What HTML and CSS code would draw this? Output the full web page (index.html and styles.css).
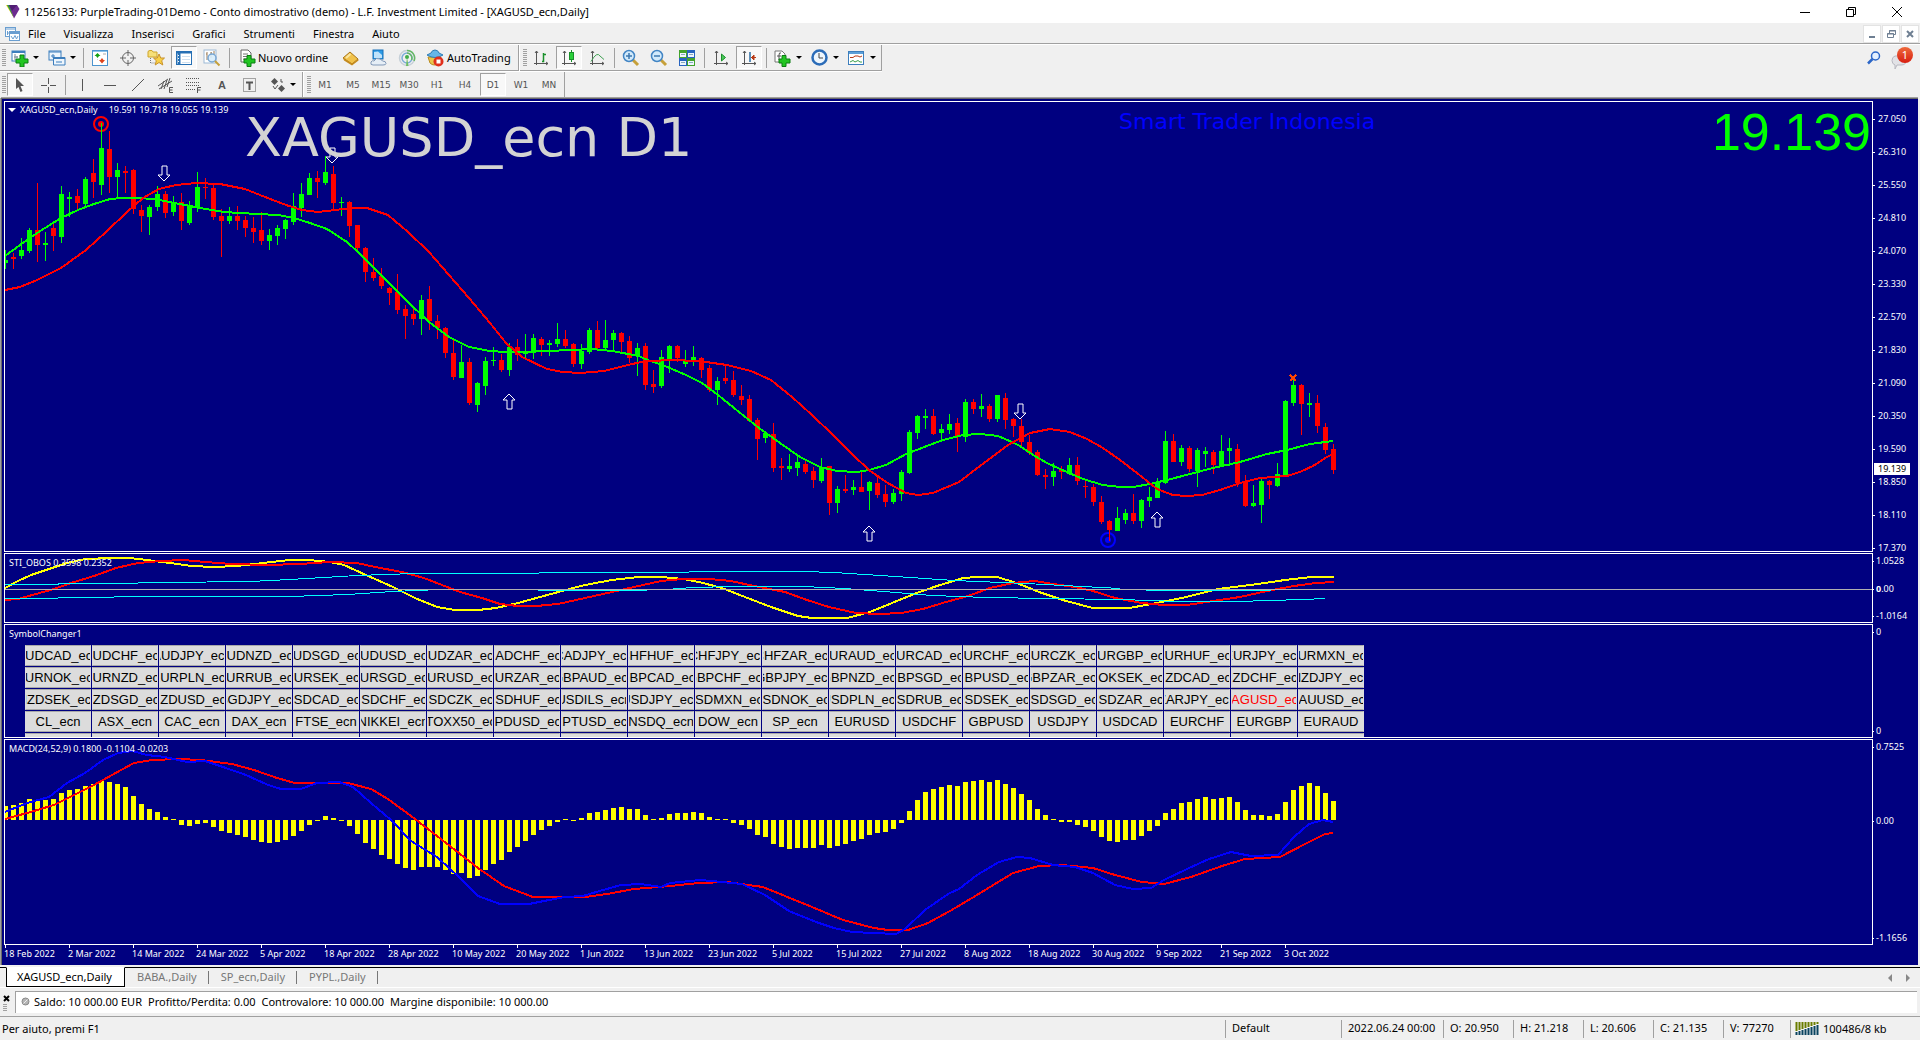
FILE: index.html
```html
<!DOCTYPE html>
<html lang="it">
<head>
<meta charset="utf-8">
<title>11256133: PurpleTrading-01Demo - [XAGUSD_ecn,Daily]</title>
<link rel="stylesheet" href="styles.css">
</head>
<body>
<header class="titlebar">
  <svg class="app-logo" width="14" height="14" viewBox="0 0 14 14"><path d="M0 0H4L8 13Z" fill="#f2d21b"/><path d="M1 0H4L7.500 12.500Z" fill="#2d9a4b"/><path d="M3 0H11L13.500 4L8 13.500Z" fill="#6c2c8f"/><path d="M3 0H11L6 6Z" fill="#4f1e72"/></svg>
  <h1 class="window-title">11256133: PurpleTrading-01Demo - Conto dimostrativo (demo) - L.F. Investment Limited - [XAGUSD_ecn,Daily]</h1>
  <div class="window-controls">
    <button aria-label="Riduci a icona"><svg width="12" height="12"><path d="M1 6.500H11" stroke="#000"/></svg></button>
    <button aria-label="Ripristina"><svg width="12" height="12" fill="none" stroke="#000"><path d="M1.500 3.500H8.500V10.500H1.500ZM3.500 3.500V1.500H10.500V8.500H8.500"/></svg></button>
    <button aria-label="Chiudi"><svg width="12" height="12" stroke="#000"><path d="M1 1L11 11M11 1L1 11"/></svg></button>
  </div>
</header>
<nav class="menubar">
  <svg class="menu-icon" width="15" height="14" fill="#fff" stroke="#6a9ed0"><rect x="0.500" y="0.500" width="10" height="9"/><path d="M1 2H10M2.500 4V8M2 6H5" /><rect x="4.500" y="4.500" width="10" height="9"/><path d="M5 6H14" stroke-width="2"/><path d="M6 9L8 12L10 8.500L11.500 12L13 9" fill="none"/></svg>
  <button>File</button><button>Visualizza</button><button>Inserisci</button><button>Grafici</button><button>Strumenti</button><button>Finestra</button><button>Aiuto</button>
  <div class="mdi-controls">
    <button aria-label="Riduci grafico"><svg width="10" height="10"><path d="M2 8H8" stroke="#6e7f92" stroke-width="2"/></svg></button>
    <button aria-label="Ripristina grafico"><svg width="10" height="10" fill="none" stroke="#6e7f92"><path d="M1.500 4.500H7.500V8.500H1.500ZM1 5H8M3.500 4V1.500H9.500V5.500H8M3 2H10"/></svg></button>
    <button aria-label="Chiudi grafico"><svg width="10" height="10" stroke="#6e7f92" stroke-width="2"><path d="M2 2L8 8M8 2L2 8"/></svg></button>
  </div>
</nav>

<div class="toolbars">
  <div class="toolbar-rows">
  <div class="toolbar-row">
    <div class="toolbar">
      <i class="grip"></i>
      <button class="tool drop" aria-label="Nuovo grafico"><svg width="18" height="18"><rect x="1" y="2" width="13" height="10" fill="#fff" stroke="#3c7ebd"/><path d="M1 3H14" stroke="#3c7ebd" stroke-width="2"/><path d="M4 5V11M3 8H7M6 7V9" stroke="#7a8a98" fill="none"/><path d="M9 6H13V10H17V14H13V18H9V14H5V10H9Z" fill="#22c522" stroke="#0b7d12"/></svg></button>
      <button class="tool drop" aria-label="Profili"><svg width="18" height="18" fill="#eef6fd" stroke="#3c7ebd"><rect x="1" y="2" width="12" height="9"/><path d="M1 3H13M3 7H7M5 5V9"/><path d="M5.500 8.500H17V16H5.500Z"/><path d="M5 9H17" stroke-width="2"/><path d="M8 13H14"/></svg></button>
      <i class="sep"></i>
      <button class="tool" aria-label="Market Watch"><svg width="16" height="16"><rect x="0.500" y="0.500" width="15" height="15" fill="#fff" stroke="#4b94cf"/><path d="M1 1.500H15" stroke="#8cc3ea"/><path d="M2.500 6L5.500 3L8.500 6H7L5.500 8L4 6Z" fill="#12a012"/><path d="M7 10H8.500L10 8L11.500 10H13L10 13.500Z" fill="#e0441c"/><path d="M5.500 9V9.500M11 4H14" stroke="#aaa"/></svg></button>
      <button class="tool" aria-label="Finestra dati"><svg width="16" height="16" fill="none" stroke="#666"><circle cx="8" cy="8" r="5.500"/><path d="M8 0V6M8 10V16M0 8H6M10 8H16"/></svg></button>
      <button class="tool" aria-label="Navigatore"><svg width="18" height="17"><path d="M1 3Q1 1.500 3 1.500H5L6 3H10V8H1Z" fill="#f6df78" stroke="#cfa52a"/><path d="M3.500 9V14H8" fill="none" stroke="#777" stroke-dasharray="1 1"/><path d="M12 5L13.700 9H17.500L14.700 11.700L15.800 16L12 13.500L8.200 16L9.300 11.700L6.500 9H10.300Z" fill="#f8cf45" stroke="#c8922a"/></svg></button>
      <button class="tool pressed" aria-label="Terminale"><svg width="16" height="14"><rect x="0.500" y="0.500" width="15" height="13" fill="#fff" stroke="#256fb4"/><path d="M1 1.500H15" stroke="#256fb4" stroke-width="2"/><path d="M3 2V13" stroke="#256fb4" stroke-width="3"/><path d="M2 4.500H3M2 7.500H3M2 10.500H3" stroke="#fff"/><path d="M6 5.500H14M6 8.500H14M6 11.500H14" stroke="#cfe0f0"/></svg></button>
      <button class="tool" aria-label="Tester strategia"><svg width="18" height="18"><rect x="1" y="1" width="12" height="13" fill="#fff" stroke="#9dbad6"/><path d="M4 3V11M8 3V9M11 2V6M3 5H4M8 4H9" stroke="#9b7d58"/><circle cx="9" cy="9" r="4" fill="#d7ecfb" fill-opacity=".9" stroke="#78a7d4" stroke-width="1.500"/><path d="M12 12L16.500 16.500" stroke="#c6a03a" stroke-width="2"/></svg></button>
      <i class="sep"></i>
      <button class="tool order"><svg width="16" height="18"><path d="M1 1H8L11 4V13H1Z" fill="#fff" stroke="#666"/><path d="M3 5H8M3 7.500H8M3 10H7" stroke="#777"/><path d="M7 6.500H11V10H15V14H11V17.500H7V14H4V10H7Z" fill="#22c522" stroke="#0b7d12"/></svg>Nuovo ordine</button>
      <button class="tool" aria-label="MetaEditor"><svg width="18" height="16"><path d="M1 8L8 2L16 9L10 14Z" fill="#f1c24a" stroke="#a87518"/><path d="M1 8L2 10.500L10 15.500L16.500 10.500V9L10 13.500Z" fill="#c58b1e"/><path d="M4 8L8.500 4" stroke="#fbe6a0" stroke-width="2"/></svg></button>
      <button class="tool" aria-label="VPS"><svg width="18" height="18"><rect x="3" y="1" width="10" height="9" fill="#2d9be6" stroke="#1871b8"/><path d="M4 3L8 2.500L12 6V9H4Z" fill="#bfe3fb"/><path d="M3 16Q0 16 1 13Q2 11 4 12Q6 8 10 10Q12 11 12.500 12Q16 12 16 14.500Q16 16 13 16Z" fill="#e6eef6" stroke="#8299b8"/></svg></button>
      <button class="tool" aria-label="Segnali"><svg width="18" height="18" fill="none"><circle cx="9" cy="9" r="7.500" stroke="#c6d0d8" stroke-width="1.500"/><circle cx="9" cy="9" r="5" stroke="#7bacd8" stroke-width="1.500"/><path d="M9 1.500A7.500 7.500 0 0 1 16 12M9 4A5 5 0 0 1 13.500 11" stroke="#65b865" stroke-width="1.500"/><circle cx="9" cy="8" r="2" fill="#3fae48"/><path d="M9 8L10.500 17H8Z" fill="#6ebd63"/></svg></button>
      <button class="tool auto"><svg width="18" height="18"><path d="M2 8L15 8L13 14Q8 18 4 14Z" fill="#e9c54c" stroke="#b98b22"/><path d="M1 6Q9 11 17 6L13 4Q12 1 9 1Q6 1 5 4Z" fill="#66b6e8" stroke="#2f7cb5"/><circle cx="12.500" cy="12.500" r="5" fill="#e02f1b"/><rect x="10.500" y="10.500" width="4" height="4" fill="#fff"/></svg>AutoTrading</button>
    </div>
    <div class="toolbar">
      <i class="grip"></i>
      <button class="tool" aria-label="Grafico a barre"><svg width="16" height="16" fill="none" stroke="#555"><path d="M3.500 1V15M1 13.500H15M2 3L3.500 1L5 3M13 12L15 13.500L13 15"/><path d="M9 11.500H10.500V3M10.500 4.500H13" stroke="#19902a" stroke-width="1.500"/></svg></button>
      <button class="tool pressed" aria-label="Candele"><svg width="16" height="16" fill="none" stroke="#555"><path d="M3.500 1V15M1 13.500H15M2 3L3.500 1L5 3M13 12L15 13.500L13 15"/><path d="M10.500 0V12" stroke="#19902a"/><rect x="8.500" y="2.500" width="4" height="7" fill="#2bd03a" stroke="#19902a"/></svg></button>
      <button class="tool" aria-label="Grafico lineare"><svg width="16" height="16" fill="none" stroke="#555"><path d="M3.500 1V15M1 13.500H15M2 3L3.500 1L5 3M13 12L15 13.500L13 15"/><path d="M2 11.500Q8 1 11 6L15 9.500" stroke="#3fa052"/></svg></button>
      <i class="sep"></i>
      <button class="tool" aria-label="Ingrandisci"><svg width="18" height="18"><path d="M10 10L16 16" stroke="#c6a03a" stroke-width="3"/><circle cx="7" cy="7" r="5.500" fill="#d2eafb" stroke="#4285c4" stroke-width="1.500"/><path d="M4 7H10M7 4V10" stroke="#3c78b0" stroke-width="1.500"/></svg></button>
      <button class="tool" aria-label="Riduci"><svg width="18" height="18"><path d="M10 10L16 16" stroke="#c6a03a" stroke-width="3"/><circle cx="7" cy="7" r="5.500" fill="#d2eafb" stroke="#4285c4" stroke-width="1.500"/><path d="M4 7H10" stroke="#3c78b0" stroke-width="1.500"/></svg></button>
      <button class="tool" aria-label="Affianca"><svg width="16" height="16"><path d="M0 0H8V8H0ZM8 8H16V16H8Z" fill="#43a32c"/><path d="M8 0H16V8H8ZM0 8H8V16H0Z" fill="#2864c0"/><path d="M1 3H7V7H1ZM9 3H15V7H9ZM1 11H7V15H1ZM9 11H15V15H9Z" fill="#eef5ff"/><path d="M2 4.500H6M10 4.500H14M2 12.500H6M10 12.500H14" stroke="#8ab"/></svg></button>
      <i class="sep"></i>
      <button class="tool" aria-label="Scorrimento automatico"><svg width="16" height="16" fill="none" stroke="#555"><path d="M3.500 1V15M1 13.500H15M2 3L3.500 1L5 3M13 12L15 13.500L13 15"/><path d="M8.500 4L12.500 7.500L8.500 11Z" fill="#4bc85a" stroke="#19902a"/></svg></button>
      <button class="tool pressed" aria-label="Spostamento grafico"><svg width="16" height="16" fill="none" stroke="#555"><path d="M3.500 1V15M1 13.500H15M2 3L3.500 1L5 3M13 12L15 13.500L13 15"/><path d="M9 2V12" stroke="#2b6ca3" stroke-width="1.500"/><path d="M10 7.500H15M13 5L10.500 7.500L13 10Z" stroke="#b83a16" fill="#b83a16"/></svg></button>
      <i class="sep"></i>
      <button class="tool drop" aria-label="Indicatori"><svg width="18" height="18"><path d="M1 2H8L11 5V13H1Z" fill="#fff" stroke="#777"/><path d="M7 4Q5 3 5 6V11M3 7H7" fill="none" stroke="#555"/><path d="M8 6.500H12V10H16V14H12V17.500H8V14H5V10H8Z" fill="#22c522" stroke="#0b7d12"/></svg></button>
      <button class="tool drop" aria-label="Periodicità"><svg width="18" height="18"><circle cx="8.500" cy="8.500" r="7" fill="#eef6fd" stroke="#2b6cb8" stroke-width="2.500"/><path d="M8 4V9H12" fill="none" stroke="#444"/></svg></button>
      <button class="tool drop" aria-label="Modelli"><svg width="18" height="16"><rect x="0.500" y="1.500" width="15" height="13" fill="#fff" stroke="#3c7ebd"/><path d="M1 3H15" stroke="#5c9fd8" stroke-width="2"/><path d="M2 7.500H5L7 6H10L12 7L14 6" fill="none" stroke="#b83a16"/><path d="M2 12L5 10.500L7 12L10 10.500L12 12H14" fill="none" stroke="#3aa04a"/></svg></button>
    </div>
  </div>
  <div class="toolbar-row second">
    <div class="toolbar">
      <i class="grip"></i>
      <button class="tool pressed" aria-label="Cursore"><svg width="12" height="16"><path d="M2 1L10 9H6.500L8.500 14L6.500 15L4.500 10L2 12Z" fill="#555"/></svg></button>
      <button class="tool" aria-label="Mirino"><svg width="16" height="16" stroke="#555"><path d="M8.500 1V7M8.500 10V16M1 8.500H7M10 8.500H16"/></svg></button>
      <i class="sep"></i>
      <button class="tool" aria-label="Linea verticale"><svg width="16" height="16" stroke="#555"><path d="M8.500 2V14"/></svg></button>
      <button class="tool" aria-label="Linea orizzontale"><svg width="16" height="16" stroke="#555"><path d="M2 8.500H14"/></svg></button>
      <button class="tool" aria-label="Linea di tendenza"><svg width="16" height="16" stroke="#555"><path d="M2 14L14 2"/></svg></button>
      <button class="tool" aria-label="Canale equidistante"><svg width="16" height="16" fill="none" stroke="#555"><path d="M0 9L10 2M1 12L14 4M3 12L6 4M6 12L9 3M9 10L12 1"/><path d="M15 10.500H11.500V15.500H15M12 13H14.500"/></svg></button>
      <button class="tool" aria-label="Fibonacci"><svg width="16" height="16" fill="none" stroke="#555"><path d="M0 1.500H14M0 5.500H14M0 8.500H14M0 12.500H9" stroke-dasharray="1 1"/><path d="M15 10.500H11.500V16M12 13H14.500"/></svg></button>
      <button class="tool letter" aria-label="Testo">A</button>
      <button class="tool" aria-label="Etichetta"><svg width="14" height="14" fill="none" stroke="#555"><rect x="0.500" y="0.500" width="12" height="13" stroke-dasharray="1 1"/><path d="M3 4.500H10M6.500 4V12" stroke-width="2"/></svg></button>
      <button class="tool drop shapes" aria-label="Frecce"><svg width="16" height="16" fill="#555"><path d="M4.500 1L8 4.500L4.500 8L1 4.500Z"/><path d="M11.500 8L15 11.500L11.500 15L8 11.500Z"/><path d="M3 9L5 12L8 8M11 2V5H13" fill="none" stroke="#555"/></svg></button>
    </div>
    <div class="toolbar frames">
      <i class="grip"></i>
      <button class="tool">M1</button><button class="tool">M5</button><button class="tool">M15</button><button class="tool">M30</button><button class="tool">H1</button><button class="tool">H4</button><button class="tool pressed">D1</button><button class="tool">W1</button><button class="tool">MN</button>
    </div>
  </div>
  </div>
  <div class="toolbar-right">
    <button aria-label="Cerca"><svg width="14" height="14" fill="none"><circle cx="8.500" cy="5" r="4" fill="#e4f0ff" stroke="#2b66c8" stroke-width="1.500"/><path d="M5.500 8L1 12.500" stroke="#2b66c8" stroke-width="2.500"/></svg></button>
    <button class="chat" aria-label="Notifiche"><svg width="16" height="15"><path d="M4 1H12Q15 2 15 6Q15 10 10 10H6L4 14V10Q1 9 1 5.500Q1 2 4 1Z" fill="#e2e2e6" stroke="#b8b8c0"/></svg><span class="badge">1</span></button>
  </div>
</div>

<main class="chart">
  <section class="plot">
    <svg id="price" viewBox="5 102 1867 449" preserveAspectRatio="xMinYMin meet" shape-rendering="crispEdges"></svg>
    <p class="caption main-caption"><i class="caret"></i><span>XAGUSD_ecn,Daily</span> 19.591 19.718 19.055 19.139</p>
    <p class="watermark">XAGUSD_ecn D1</p>
    <p class="author">Smart Trader Indonesia</p>
    <p class="quote">19.139</p>
  </section>
  <div class="scale price-scale">
    <span>27.050</span><span>26.310</span><span>25.550</span><span>24.810</span><span>24.070</span><span>23.330</span><span>22.570</span><span>21.830</span><span>21.090</span><span>20.350</span><span>19.590</span><span>18.850</span><span>18.110</span><span>17.370</span>
    <b class="last-price">19.139</b>
  </div>

  <section class="plot">
    <svg id="obos" viewBox="5 554 1867 68" preserveAspectRatio="xMinYMin meet" shape-rendering="crispEdges"></svg>
    <p class="caption">STI_OBOS 0.3598 0.2352</p>
  </section>
  <div class="scale"><span>1.0528</span><span><b class="zero">0</b>.00</span><span>-1.0164</span></div>

  <section class="plot">
    <p class="caption">SymbolChanger1</p>
    <div class="symbols" id="symbols"></div>
  </section>
  <div class="scale"><span>0</span><span>0</span></div>

  <section class="plot">
    <svg id="macd" viewBox="5 740 1867 204" preserveAspectRatio="xMinYMin meet" shape-rendering="crispEdges"></svg>
    <p class="caption">MACD(24,52,9) 0.1800 -0.1104 -0.0203</p>
  </section>
  <div class="scale macd-scale"><span>0.7525</span><span>0.00</span><span>-1.1656</span></div>

  <div class="dates">
    <span>18 Feb 2022</span><span>2 Mar 2022</span><span>14 Mar 2022</span><span>24 Mar 2022</span><span>5 Apr 2022</span><span>18 Apr 2022</span><span>28 Apr 2022</span><span>10 May 2022</span><span>20 May 2022</span><span>1 Jun 2022</span><span>13 Jun 2022</span><span>23 Jun 2022</span><span>5 Jul 2022</span><span>15 Jul 2022</span><span>27 Jul 2022</span><span>8 Aug 2022</span><span>18 Aug 2022</span><span>30 Aug 2022</span><span>9 Sep 2022</span><span>21 Sep 2022</span><span>3 Oct 2022</span>
  </div>
</main>

<nav class="tabs">
  <button class="active">XAGUSD_ecn,Daily</button><button>BABA.,Daily</button><button>SP_ecn,Daily</button><button>PYPL.,Daily</button>
  <div class="tab-scroll">
    <button aria-label="Indietro"><svg width="5" height="8"><path d="M5 0V8L1 4Z" fill="#888"/></svg></button>
    <button aria-label="Avanti"><svg width="5" height="8"><path d="M0 0V8L4 4Z" fill="#888"/></svg></button>
  </div>
</nav>

<section class="account">
  <div class="account-handle"><button aria-label="Chiudi terminale"><svg width="7" height="7" stroke="#000" stroke-width="2"><path d="M1 1L6 6M6 1L1 6"/></svg></button><i class="grip short"></i></div>
  <div class="account-line"><svg width="9" height="9"><circle cx="4.500" cy="4.500" r="3.500" fill="#b5b5b5" stroke="#888"/><path d="M2.500 6.500L6.500 2.500" stroke="#eee"/></svg><span>Saldo: 10 000.00 EUR</span><span>Profitto/Perdita: 0.00</span><span>Controvalore: 10 000.00</span><span>Margine disponibile: 10 000.00</span></div>
</section>

<footer class="status">
  <span class="hint">Per aiuto, premi F1</span>
  <span class="cell profile">Default</span>
  <span class="cell time">2022.06.24 00:00</span>
  <span class="cell">O: 20.950</span>
  <span class="cell">H: 21.218</span>
  <span class="cell">L: 20.606</span>
  <span class="cell">C: 21.135</span>
  <span class="cell volume">V: 77270</span>
  <span class="cell traffic"><svg width="24" height="13"><path d="M1.500 0V9M4.500 0V8M7.500 0V7M10.500 0V6M13.500 0V5M16.500 0V4M19.500 0V3M22.500 0V2" stroke="#6a7d00" stroke-width="2"/><path d="M1.500 10V13M4.500 9V13M7.500 8V13M10.500 7V13M13.500 6V13M16.500 5V13M19.500 4V13M22.500 3V13" stroke="#0b4460" stroke-width="2"/></svg>100486/8 kb</span>
</footer>
<script src="chart.js"></script>
</body>
</html>
```
FILE: styles.css
```css
* { box-sizing: border-box; }
body { margin: 0; height: 100vh; display: flex; flex-direction: column; background: #f0f0f0; color: #000; font: 11px/16px "Noto Sans", "Open Sans", sans-serif; }
button { font: inherit; color: inherit; background: none; border: 0; padding: 0; margin: 0; }
svg { display: block; flex: none; }
p, h1 { margin: 0; }

.titlebar { display: flex; align-items: center; height: 23px; background: #fff; }
.app-logo { margin-left: 6px; }
.window-title { flex: 1; margin-left: 4px; font-size: 11px; font-weight: 400; }
.window-controls { display: flex; }
.window-controls button { width: 46px; height: 20px; display: grid; place-items: center; }

.menubar { display: flex; align-items: center; height: 22px; padding-left: 5px; border-bottom: 1px solid #fff; box-shadow: inset 0 -1px #a0a0a0; }
.menubar > button { padding: 0 8px; margin-right: 2px; }
.mdi-controls { margin-left: auto; display: flex; gap: 1px; padding-right: 1px; }
.mdi-controls button { width: 18px; height: 18px; display: grid; place-items: center; background: #fff; border: 1px solid #e3e3e3; }

.toolbars { display: flex; justify-content: space-between; }
.toolbar-rows { display: flex; flex-direction: column; align-items: flex-start; }
.toolbar-row { display: flex; height: 27px; border-bottom: 1px solid #fff; box-shadow: inset 0 -1px #a0a0a0; }
.toolbar-row.second { height: 25px; border: 0; box-shadow: none; }
.toolbar { display: flex; align-items: center; padding: 0 1px 1px 2px; border-right: 1px solid #a0a0a0; }
.toolbar + .toolbar { padding-left: 3px; border-left: 1px solid #fff; }
.second .toolbar { padding-bottom: 0; }
.grip { width: 4px; height: 18px; background: repeating-linear-gradient(#a0a0a0 0 1px, #f0f0f0 1px 2px); }
.grip.short { height: 8px; }
.sep { width: 1px; height: 20px; margin: 0 2px 0 3px; background: #a0a0a0; }
.tool { display: flex; align-items: center; justify-content: center; width: 28px; height: 24px; }
.tool.pressed { width: 26px; height: 23px; margin: 0 1px; background: #f8f8f8; border: 1px solid; border-color: #a0a0a0 #fff #fff #a0a0a0; }
.tool.drop { width: 37px; justify-content: flex-start; padding-left: 5px; gap: 4px; }
.tool.drop::after { content: ""; border: 3px solid transparent; border-top-color: #000; border-bottom: 0; }
.tool.shapes { padding-left: 6px; }
.tool.order { width: 105px; justify-content: flex-start; padding-left: 8px; gap: 2px; }
.tool.auto { width: 96px; justify-content: flex-start; padding-left: 5px; gap: 3px; }
.tool.letter { color: #555; font: bold 11px "Liberation Sans", sans-serif; }
.frames { font: 9px "DejaVu Sans", sans-serif; color: #555; }
.toolbar-right { display: flex; align-items: flex-start; gap: 10px; padding: 4px 7px 0 0; }
.toolbar-right button { position: relative; padding-top: 2px; }
.chat { width: 22px; }
.toolbar-right .chat { padding-top: 6px; }
.badge { position: absolute; top: -2px; left: 6px; width: 16px; height: 16px; border-radius: 8px; background: linear-gradient(#ee6a3c, #d81e10); color: #fff; }

.chart { flex: 1; min-height: 0; display: grid; grid-template-columns: minmax(0, 1fr) 45px; grid-template-rows: minmax(0, 451fr) minmax(0, 70fr) minmax(0, 114fr) minmax(0, 206fr) 19px; row-gap: 1px; padding: 2px 0 0 2px; background: #000080; color: #fff; border: solid #696969; border-width: 1px 0 0 1px; box-shadow: 0 -1px #a0a0a0, -1px 0 #a0a0a0; margin: 1px 2px 0 1px; font-size: 9px; line-height: 12px; }
.plot { position: relative; border: 1px solid #fff; overflow: hidden; }
.plot > svg { position: absolute; inset: 0; width: 100%; height: 100%; }
.caption { position: absolute; left: 4px; top: 3px; white-space: nowrap; }
.main-caption { display: flex; align-items: center; gap: 4px; left: 3px; top: 2px; }
.main-caption span { margin-right: 7px; }
.caret { border: 4px solid transparent; border-top-color: #fff; border-bottom: 0; }
.watermark { position: absolute; left: 240px; top: 4px; font: 54px/64px "DejaVu Sans", sans-serif; color: #d3d3d3; }
.author { position: absolute; left: 1114px; top: 8px; font: 22px/24px "DejaVu Sans", sans-serif; color: #00f; }
.quote { position: absolute; right: 1px; top: 1px; font: 52px/58px "Liberation Sans", sans-serif; color: #0f0; }

.scale { position: relative; display: flex; flex-direction: column; justify-content: space-between; padding: 2px 0 1px 3px; }
.scale span { line-height: 12px; height: 12px; position: relative; }
.scale span::before { content: ""; position: absolute; left: -3px; top: 6px; width: 1px; height: 1px; background: #fff; }
.price-scale { padding: 14px 0 0 5px; }
.price-scale span { height: 8px; line-height: 8px; }
.price-scale span::before { left: -5px; top: 4px; width: 2px; }
.last-price { position: absolute; left: 1px; top: 362px; width: 36px; padding-left: 4px; background: #fff; color: #000; font-weight: 400; }
.macd-scale span:nth-child(2) { margin-bottom: 44px; }

.symbols { display: grid; grid-template-columns: repeat(20, 66px); grid-auto-rows: 21px; gap: 1px; margin: 20px 0 0 20px; }
.symbols button { display: flex; justify-content: center; align-items: center; overflow: hidden; white-space: nowrap; background: #dcdcdc; border: 1px solid; border-color: #a9a9a9 #dcdcdc; color: #000; font: 13px/18px "Liberation Sans", sans-serif; }
.symbols .current { color: #f00; }

.dates { display: flex; }
.dates span { flex: 0 0 64px; position: relative; padding-top: 2px; white-space: nowrap; }
.dates span::before { content: ""; position: absolute; left: 1px; top: -1px; width: 1px; height: 3px; background: #fff; }

.tabs { display: flex; height: 21px; margin-top: 2px; padding-left: 6px; border-top: 1px solid #000; border-bottom: 1px solid #fff; color: #777; }
.tabs > button { height: 19px; padding: 0 12px 2px; position: relative; }
.tabs > button:not(.active)::after { content: ""; position: absolute; right: 0; top: 3px; width: 1px; height: 13px; background: #777; }
.tabs > .active { margin-top: -1px; height: 20px; padding: 0 12px 1px 10px; background: #fff; color: #000; border: 1px solid #000; border-top-color: #fff; }
.tab-scroll { margin-left: auto; display: flex; gap: 14px; padding-right: 9px; }

.account { display: flex; margin-top: 3px; height: 25px; }
.account-handle { width: 15px; padding: 4px 0 0 3px; display: flex; flex-direction: column; gap: 2px; }
.account-handle button { line-height: 0; }
.account-line { flex: 1; height: 22px; margin-right: 3px; display: flex; align-items: center; gap: 6px; padding: 0 0 2px 5px; background: #fff; border: solid #a0a0a0; border-width: 1px 0 0 1px; }
.account-line svg { margin-right: -2px; }

.status { display: flex; align-items: center; height: 24px; border-top: 1px solid #a0a0a0; }
.hint { flex: 1; padding-left: 2px; }
.cell { flex: none; width: 70px; height: 18px; padding-left: 6px; border-left: 1px solid #a0a0a0; white-space: nowrap; }
.profile { width: 116px; }
.time { width: 102px; }
.volume { width: 67px; }
.traffic { width: 130px; padding-left: 4px; display: flex; align-items: center; gap: 4px; }
```
FILE: chart.js
```js
// Bars are 8px apart; the first one sits at x = 5.
const barX = i => 5 + 8 * i;

// colour, high, body top, body bottom, low
const candles = `g250,260,263,269 r253,257,259,269 g238,250,256,259 g228,230,251,253 r183,230,245,262 g232,243,245,261 r221,228,236,251 g186,194,237,243 g192,197,199,217 r189,196,203,210
g177,179,204,206 r159,173,182,198 g123,148,185,195 r131,149,177,193 g163,170,177,197 r166,171,173,193 r169,170,209,214 r205,210,216,232 g205,207,217,235 g186,194,207,211
r191,194,213,218 g196,202,212,216 r193,202,221,230 g201,205,223,225 g172,187,207,212 r178,187,188,199 r185,188,217,220 r209,216,221,257 g207,216,221,224 r206,216,221,230
r216,220,228,237 r217,228,232,243 r212,230,241,245 g229,235,241,250 g225,228,236,245 g219,220,229,239 g193,206,222,225 g183,194,208,217 g173,178,195,195 r171,178,182,198
g156,172,183,185 r166,174,203,209 g197,202,203,216 r201,202,226,237 r225,225,248,251 r247,248,272,282 r258,272,278,281 r268,276,286,289 r287,288,293,305 r274,292,310,314
r305,309,316,339 r307,314,319,325 g295,300,319,335 r286,299,321,330 r315,321,328,339 r327,328,353,358 r338,353,377,380 g345,362,378,378 r358,362,403,405 g382,383,405,412
g357,361,386,395 g347,360,361,366 r354,360,370,372 g343,347,370,376 r339,347,355,361 g334,352,354,359 g334,338,353,359 r337,339,345,356 g340,343,345,356 g323,339,344,347
r330,339,346,348 r343,344,364,367 g344,351,364,369 g328,330,352,354 r321,330,348,350 g320,340,348,350 g330,333,340,352 r332,333,342,354 r336,341,358,363 g343,348,356,376
r343,346,385,390 r370,384,387,393 g350,357,386,388 g345,346,359,373 r345,346,358,362 g350,361,364,367 g346,357,362,366 r357,358,370,378 r365,368,390,392 g377,381,390,405
r365,378,381,384 r371,380,395,397 r385,396,400,405 r395,399,421,422 r418,420,439,460 g431,433,438,443 r423,434,468,472 r458,466,468,480 g454,466,469,472 g456,462,468,476
r459,464,472,474 r467,471,480,488 g458,467,481,483 r466,466,503,515 g486,489,503,513 r475,489,491,493 g480,487,490,495 r472,487,492,492 g481,482,491,510 r477,483,495,498
r485,494,502,507 g489,493,502,504 g470,472,494,501 g430,432,473,474 g415,416,433,439 g409,416,418,429 r409,416,434,435 g424,429,433,440 g414,424,430,434 r418,423,437,452
g399,402,437,442 r399,402,409,414 g394,406,409,417 r404,406,419,422 g395,395,419,422 r393,398,420,429 r418,419,426,437 r419,426,442,446 r435,442,453,455 r450,452,475,476
r469,475,477,489 g463,471,477,486 r466,470,472,479 g458,465,474,475 r457,465,481,485 r481,486,487,498 r484,487,502,506 r496,502,522,524 r520,521,530,541 g507,518,531,531
g509,513,520,524 r494,513,521,524 g499,500,521,528 g487,497,501,507 g478,483,498,498 g431,441,483,484 r434,441,462,462 g445,448,462,466 r446,448,469,472 g448,450,471,487
g447,451,454,467 r450,452,465,474 g435,451,466,466 g438,448,451,466 r444,449,483,487 r475,481,506,507 g485,503,506,507 g477,481,505,523 r480,481,485,499 g463,474,486,487
g400,401,476,477 g377,385,403,406 r384,385,404,435 g393,403,405,417 r395,403,426,433 r423,427,450,454 r444,449,470,474`.split(/\s+/);

const histogram = [14,15,17,21,20,20,21,27,30,31,34,36,39,38,36,33,24,16,11,8,3,1,-5,-6,-4,-3,-7,-11,-13,-15,-17,-20,-22,-23,-22,-20,-16,-11,-5,-1,4,2,-1,-6,-14,-23,-29,-35,-39,-44,-48,-50,-47,-47,-47,-50,-54,-53,-58,-56,-50,-44,-40,-32,-27,-21,-15,-10,-6,-2,1,-1,2,7,8,10,12,13,11,11,5,1,2,6,7,7,8,7,3,1,1,-3,-5,-9,-15,-17,-24,-27,-29,-28,-28,-28,-25,-28,-26,-24,-21,-19,-15,-13,-12,-9,-3,9,20,28,31,33,35,34,38,39,40,38,40,36,32,26,20,11,5,1,-2,-2,-5,-7,-11,-17,-21,-22,-20,-20,-16,-11,-6,7,11,17,18,21,23,21,22,23,18,10,5,5,4,6,18,30,34,37,34,27,19];

const lines = {
  maFast: "5,256 16,248 31,237 45,228 61,218 78,210 94,204 110,199 122,198 141,198 159,200 180,204 200,208 224,212 257,214 278,215 294,218 310,223 327,229 347,242 359,253 371,265 388,282 408,302 429,322 449,337 469,347 490,351 506,352 522,352 547,351 571,350 592,349 612,351 639,356 645,359 665,366 686,375 702,383 718,395 739,412 759,428 780,443 800,457 820,467 837,471 857,472 869,470 886,465 906,454 927,446 943,440 963,435 980,434 998,436 1012,442 1020,446 1033,455 1047,463 1060,469 1083,479 1103,485 1120,487 1133,487 1150,484 1167,480 1190,474 1213,468 1240,462 1267,454 1287,450 1310,444 1333,441",
  maSlow: "5,290 20,287 37,280 61,268 86,250 106,232 127,212 143,198 159,189 176,185 196,183 220,184 245,189 265,197 286,205 302,210 318,212 335,210 351,208 367,208 388,215 408,232 429,252 449,275 469,298 490,323 506,343 522,357 547,369 563,372 580,373 604,371 624,366 645,361 678,360 706,362 727,365 751,371 771,380 792,397 812,415 833,435 853,455 869,470 886,482 906,493 918,495 933,493 959,482 984,463 1008,445 1030,433 1050,429 1070,432 1087,439 1103,448 1120,460 1137,473 1157,489 1173,495 1187,496 1202,495 1220,490 1240,483 1260,478 1287,476 1300,472 1313,466 1327,457 1333,454",
  obosFast: "5,588 18,581 31,575 49,569 67,563 85,559 112,558 129,558 147,560 170,563 192,566 214,567 237,566 263,563 290,560 308,560 330,562 344,565 366,575 393,587 415,598 437,607 455,610 478,610 496,608 518,603 540,597 562,591 585,585 612,580 638,577 661,577 683,579 699,582 722,588 745,597 771,607 798,616 812,618 847,618 870,612 892,603 914,594 937,586 963,578 977,577 997,577 1017,583 1039,592 1066,601 1093,608 1129,608 1146,605 1182,598 1218,589 1258,584 1285,580 1312,577 1334,577",
  obosSlow: "5,600 18,599 36,594 54,589 71,583 94,576 116,568 138,563 161,561 183,560 205,562 232,564 268,565 299,564 330,562 357,563 375,567 402,572 424,578 442,585 460,592 482,598 500,604 518,606 536,606 558,604 585,598 612,592 634,587 661,581 683,579 709,579 731,581 754,586 785,592 807,600 829,607 856,613 879,614 901,613 923,609 946,602 968,596 990,588 1013,583 1035,581 1053,584 1075,587 1093,591 1115,598 1142,603 1164,605 1187,605 1213,601 1240,597 1267,591 1294,586 1316,583 1334,582",
  bandHigh: "5,585 112,584 165,583 250,582 290,580 357,576 415,574 665,573 713,572 803,572 834,573 896,577 954,581 1026,584 1120,589",
  bandHigh2: "1146,591 1271,591",
  bandLow: "5,599 112,598 116,597 290,597 348,595 393,592 440,590",
  bandLow2: "538,591 647,591",
  bandLow3: "673,589 700,588 727,587 803,587 845,589 896,593 932,596 986,598 1048,599 1120,600 1178,602 1236,602 1303,600 1325,599",
  macd: "5,812 27,803 49,797 67,783 85,773 103,760 118,753 132,751 147,755 165,757 187,762 205,761 223,767 246,775 268,785 281,789 301,789 317,783 339,782 353,787 371,803 391,820 411,841 437,857 460,878 478,896 500,904 529,904 549,900 565,897 583,896 603,890 621,885 641,884 661,887 670,883 700,880 722,882 742,884 765,895 789,911 816,922 834,928 852,932 896,934 905,929 925,910 948,894 959,889 977,875 999,862 1017,857 1030,858 1053,865 1075,867 1093,873 1115,885 1133,889 1151,888 1164,880 1187,869 1209,859 1231,852 1251,856 1278,855 1294,837 1309,824 1323,820 1333,822",
  signal: "5,819 27,813 54,805 76,794 94,785 121,770 134,763 152,760 179,759 201,760 232,764 254,770 277,778 295,783 348,783 371,789 388,799 415,819 446,843 478,868 504,886 533,897 585,897 607,894 634,889 670,886 699,883 727,882 763,887 785,896 812,907 843,920 874,928 888,930 908,930 928,923 950,911 972,898 990,887 1013,873 1039,866 1062,865 1093,868 1115,875 1142,882 1164,884 1191,877 1222,866 1245,859 1280,857 1307,843 1325,834 1333,833"
};

const line = (name, colour, width) =>
  `<polyline points="${lines[name]}" fill="none" stroke="${colour}" stroke-width="${width}"/>`;
// One-pixel strokes are centred on the pixel row.
const thinLines = names => `<g transform="translate(0 -0.5)">${names.map(n => line(n, "#0ff", 1)).join("")}</g>`;

const downArrow = (x, y) => `<path d="M${x - 2} ${y}H${x + 3}V${y + 9}H${x + 6}L${x} ${y + 15}L${x - 6} ${y + 9}H${x - 2}Z" fill="none" stroke="#fff" shape-rendering="auto"/>`;
const upArrow = (x, y) => `<path d="M${x - 2} ${y + 15}H${x + 3}V${y + 6}H${x + 6}L${x} ${y}L${x - 6} ${y + 6}H${x - 2}Z" fill="none" stroke="#fff" shape-rendering="auto"/>`;
const target = (x, y, colour) => `<g shape-rendering="auto"><circle cx="${x}" cy="${y}" r="7" fill="none" stroke="${colour}" stroke-width="2"/><circle cx="${x}" cy="${y}" r="3" fill="${colour}"/></g>`;

const bars = candles.map((c, i) => {
  const [high, top, bottom, low] = c.slice(1).split(",").map(Number);
  const x = barX(i);
  const colour = c[0] === "g" ? "#0f0" : "#f00";
  return `<path fill="${colour}" d="M${x} ${high}h1V${low}h-1ZM${x - 2} ${top}h5V${Math.max(bottom, top + 1)}h-5Z"/>`;
}).join("");

document.getElementById("price").innerHTML =
  target(101, 124, "#f00") + target(1108, 540, "#00f") + bars +
  line("maFast", "#0f0", 2) + line("maSlow", "#f00", 2) +
  downArrow(164, 166) + downArrow(332, 148) + upArrow(509, 394) + upArrow(869, 526) + downArrow(1020, 404) + upArrow(1157, 512) +
  `<path d="M1290 375l6 6M1296 375l-6 6" stroke="#ff4500" stroke-width="2"/>`;

document.getElementById("obos").innerHTML =
  line("obosFast", "#ff0", 2) + line("obosSlow", "#f00", 2) +
  thinLines(["bandHigh", "bandHigh2", "bandLow", "bandLow2", "bandLow3"]) +
  `<rect x="5" y="589" width="1867" height="1" fill="#b0b0b0"/>`;

document.getElementById("macd").innerHTML =
  histogram.map((h, i) => `<rect x="${barX(i) - 2}" y="${h > 0 ? 820 - h : 820}" width="5" height="${Math.abs(h)}" fill="#ff0"/>`).join("") +
  line("signal", "#f00", 2) + line("macd", "#00f", 2);

const pairs = `AUDCAD AUDCHF AUDJPY AUDNZD AUDSGD AUDUSD AUDZAR CADCHF CADJPY CHFHUF CHFJPY CHFZAR EURAUD EURCAD EURCHF EURCZK EURGBP EURHUF EURJPY EURMXN
EURNOK EURNZD EURPLN EURRUB EURSEK EURSGD EURUSD EURZAR GBPAUD GBPCAD GBPCHF GBPJPY GBPNZD GBPSGD GBPUSD GBPZAR NOKSEK NZDCAD NZDCHF NZDJPY
NZDSEK NZDSGD NZDUSD SGDJPY USDCAD USDCHF USDCZK USDHUF USDILS USDJPY USDMXN USDNOK USDPLN USDRUB USDSEK USDSGD USDZAR ZARJPY XAGUSD XAUUSD
CL ASX CAC DAX FTSE NIKKEI STOXX50 XPDUSD XPTUSD NSDQ DOW SP`.split(/\s+/).map(s => s + "_ecn")
  .concat("EURUSD USDCHF GBPUSD USDJPY USDCAD EURCHF EURGBP EURAUD".split(" "), Array(20).fill(""));
document.getElementById("symbols").innerHTML = pairs
  .map(s => `<button${s === "XAGUSD_ecn" ? ' class="current"' : ""}>${s}</button>`).join("");
```
